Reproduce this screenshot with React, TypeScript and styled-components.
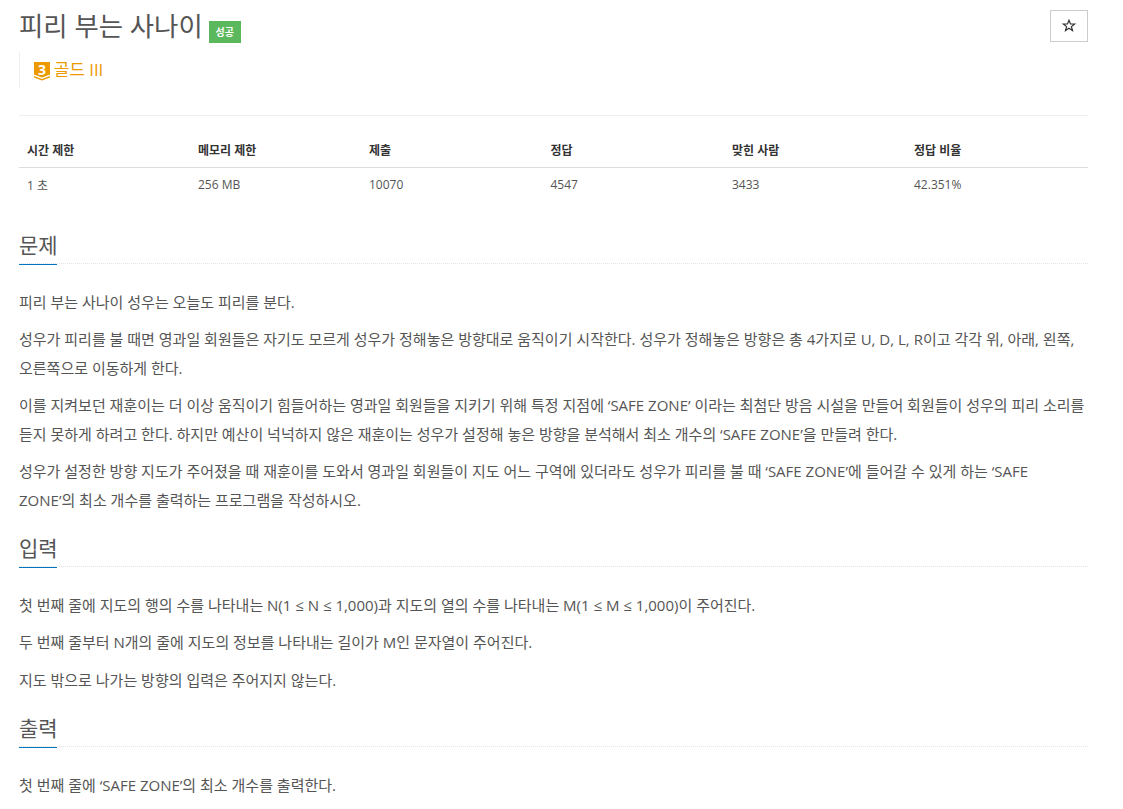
import React from "react";
import styled, { createGlobalStyle } from "styled-components";

const FONT = `"Open Sans", "Noto Sans CJK KR", sans-serif`;

const GlobalStyle = createGlobalStyle`
  html, body { margin: 0; padding: 0; background: #fff; }
  body {
    font-family: ${FONT};
    color: #555;
    font-size: 14px;
    height: 809px;
    overflow: hidden;
  }
`;

const Page = styled.div`
  width: 1069px;
  margin-left: 19px;
`;

const TitleRow = styled.div`
  display: flex;
  align-items: flex-start;
  justify-content: space-between;
  height: 52px;
`;

const Title = styled.h1`
  margin: 0;
  padding-top: 8px;
  font-size: 26.4px;
  line-height: 36px;
  font-weight: 400;
  color: #555;
  display: flex;
  align-items: flex-start;
`;

const Badge = styled.span`
  margin: 13px 0 0 6px;
  width: 32px;
  height: 22px;
  background: #5cb85c;
  color: #fff;
  font-size: 10px;
  font-weight: 700;
  line-height: 22px;
  text-align: center;
`;

const StarButton = styled.button`
  margin-top: 10px;
  width: 38px;
  height: 32px;
  padding: 0 0 2px;
  background: #fff;
  border: 1px solid #ccc;
  display: flex;
  align-items: center;
  justify-content: center;
  color: #333;
`;

const TierQuote = styled.div`
  display: flex;
  align-items: center;
  gap: 4px;
  height: 36px;
  padding-left: 14px;
  border-left: 1px solid #eee;
  color: #ec9a00;
  font-size: 16.8px;
  line-height: 34px;
`;

const TierMark = styled.span`
  position: relative;
  display: block;
  width: 16px;
  height: 19px;
  margin-top: 2px;
  svg { display: block; }
`;

const TierNumber = styled.span`
  position: absolute;
  left: 0;
  right: 0;
  top: 0;
  color: #fff;
  font-size: 14px;
  font-weight: 700;
  line-height: 15px;
  text-align: center;
`;

const Rule = styled.hr`
  margin: 27px 0 0;
  border: 0;
  border-top: 1px solid #eee;
`;

const StatsTable = styled.table`
  width: 100%;
  margin-top: 17px;
  border-collapse: collapse;
  table-layout: fixed;
  font-size: 12px;
`;

const HeadCell = styled.th<{ $width: number }>`
  width: ${(p) => p.$width}px;
  box-sizing: border-box;
  padding: 0 8px;
  height: 34px;
  text-align: left;
  font-weight: 700;
  color: #333;
  border-bottom: 1px solid #ddd;
`;

const BodyCell = styled.td`
  padding: 0 8px;
  height: 34px;
  color: #555;
`;

const SectionHead = styled.div<{ $top: number }>`
  display: flex;
  align-items: flex-start;
  margin-top: ${(p) => p.$top}px;
  border-bottom: 1px dotted #e4e4e4;
  height: 32px;
`;

const SectionTitle = styled.h2`
  margin: 0;
  height: 33px;
  width: 38px;
  font-size: 21px;
  line-height: 28px;
  font-weight: 400;
  color: #555;
  border-bottom: 1px solid #0076c0;
  box-sizing: content-box;
  white-space: nowrap;
`;

const Body = styled.div`
  padding-top: 24px;
`;

const Para = styled.p`
  margin: 0 0 9px;
  font-size: 15px;
  line-height: 28.5px;
  color: #555;
`;

const TierIcon = () => (
  <svg width="16" height="19" viewBox="0 0 16 19" aria-hidden="true">
    <path d="M0 0H16V12.5L8 15.5L0 12.5Z" fill="#ec9a00" />
    <path d="M0 14L8 17L16 14V15.5L8 18.5L0 15.5Z" fill="#ec9a00" />
  </svg>
);

const StarIcon = () => (
  <svg width="14" height="13" viewBox="0 0 14 13" aria-hidden="true">
    <path d="M7 1.2L8.5 5H12.6L9.4 7.6L10.5 11.6L7 9.3L3.5 11.6L4.6 7.6L1.4 5H5.5Z" fill="none" stroke="#333" strokeWidth="1.2" />
  </svg>
);

const stats = [
  { head: "시간 제한", value: "1 초", width: 171 },
  { head: "메모리 제한", value: "256 MB", width: 171 },
  { head: "제출", value: "10070", width: 181.5 },
  { head: "정답", value: "4547", width: 181.5 },
  { head: "맞힌 사람", value: "3433", width: 182 },
  { head: "정답 비율", value: "42.351%", width: 182 },
];

export default function App() {
  return (
    <Page>
      <GlobalStyle />
      <TitleRow>
        <Title>
          피리 부는 사나이
          <Badge>성공</Badge>
        </Title>
        <StarButton>
          <StarIcon />
        </StarButton>
      </TitleRow>
      <TierQuote>
        <TierMark>
          <TierIcon />
          <TierNumber>3</TierNumber>
        </TierMark>
        <span>골드 III</span>
      </TierQuote>
      <Rule />
      <StatsTable>
        <thead>
          <tr>
            {stats.map((s) => (
              <HeadCell key={s.head} $width={s.width}>{s.head}</HeadCell>
            ))}
          </tr>
        </thead>
        <tbody>
          <tr>
            {stats.map((s) => (
              <BodyCell key={s.head}>{s.value}</BodyCell>
            ))}
          </tr>
        </tbody>
      </StatsTable>

      <SectionHead $top={29}>
        <SectionTitle>문제</SectionTitle>
      </SectionHead>
      <Body>
        <Para>피리 부는 사나이 성우는 오늘도 피리를 분다.</Para>
        <Para>성우가 피리를 불 때면 영과일 회원들은 자기도 모르게 성우가 정해놓은 방향대로 움직이기 시작한다. 성우가 정해놓은 방향은 총 4가지로 U, D, L, R이고 각각 위, 아래, 왼쪽, 오른쪽으로 이동하게 한다.</Para>
        <Para>이를 지켜보던 재훈이는 더 이상 움직이기 힘들어하는 영과일 회원들을 지키기 위해 특정 지점에 ‘SAFE ZONE’ 이라는 최첨단 방음 시설을 만들어 회원들이 성우의 피리 소리를 듣지 못하게 하려고 한다. 하지만 예산이 넉넉하지 않은 재훈이는 성우가 설정해 놓은 방향을 분석해서 최소 개수의 ‘SAFE ZONE’을 만들려 한다.</Para>
        <Para>성우가 설정한 방향 지도가 주어졌을 때 재훈이를 도와서 영과일 회원들이 지도 어느 구역에 있더라도 성우가 피리를 불 때 ‘SAFE ZONE’에 들어갈 수 있게 하는 ‘SAFE ZONE’의 최소 개수를 출력하는 프로그램을 작성하시오.</Para>
      </Body>

      <SectionHead $top={19.5}>
        <SectionTitle>입력</SectionTitle>
      </SectionHead>
      <Body>
        <Para>첫 번째 줄에 지도의 행의 수를 나타내는 N(1 ≤ N ≤ 1,000)과 지도의 열의 수를 나타내는 M(1 ≤ M ≤ 1,000)이 주어진다.</Para>
        <Para>두 번째 줄부터 N개의 줄에 지도의 정보를 나타내는 길이가 M인 문자열이 주어진다.</Para>
        <Para>지도 밖으로 나가는 방향의 입력은 주어지지 않는다.</Para>
      </Body>

      <SectionHead $top={19.5}>
        <SectionTitle>출력</SectionTitle>
      </SectionHead>
      <Body>
        <Para>첫 번째 줄에 ‘SAFE ZONE’의 최소 개수를 출력한다.</Para>
      </Body>
    </Page>
  );
}
